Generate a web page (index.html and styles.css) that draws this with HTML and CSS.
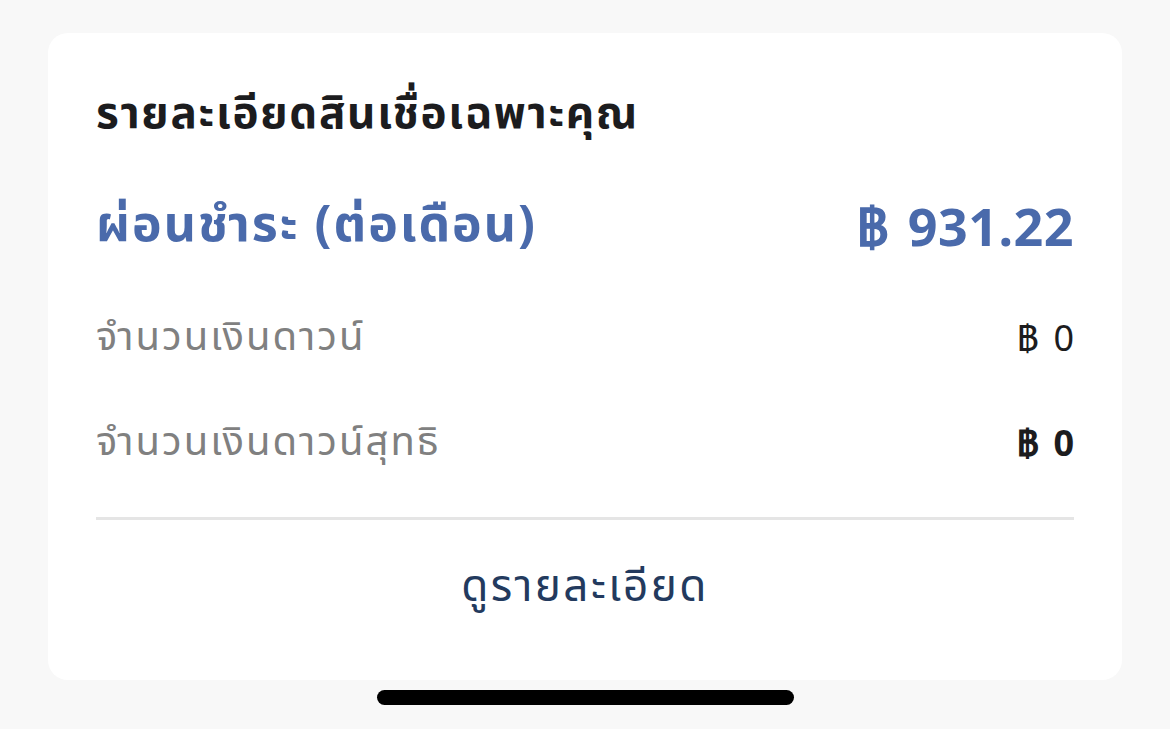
FILE: index.html
```html
<!DOCTYPE html>
<html lang="th">
<head>
<meta charset="utf-8">
<link rel="stylesheet" href="styles.css">
</head>
<body>
<div class="screen">
  <div class="card">
    <h1 class="title">รายละเอียดสินเชื่อเฉพาะคุณ</h1>
    <div class="row row-main">
      <span class="label-main">ผ่อนชำระ (ต่อเดือน)</span>
      <span class="value-main">฿ 931.22</span>
    </div>
    <div class="row row-sub row-first">
      <span class="label">จำนวนเงินดาวน์</span>
      <span class="value">฿ 0</span>
    </div>
    <div class="row row-sub row-second">
      <span class="label">จำนวนเงินดาวน์สุทธิ</span>
      <span class="value value-bold">฿ 0</span>
    </div>
    <div class="divider"></div>
    <div class="action">ดูรายละเอียด</div>
  </div>
  <div class="home-bar"></div>
</div>
</body>
</html>
```
FILE: styles.css
```css
html, body {
  margin: 0;
  padding: 0;
  background: #f8f8f8;
}
body {
  font-family: "Noto Sans Thai", "Noto Sans", "Open Sans", sans-serif;
  width: 1170px;
  height: 729px;
  overflow: hidden;
}
.screen {
  padding: 33px 48px 0 48px;
  display: flex;
  flex-direction: column;
  align-items: stretch;
}
.card {
  background: #ffffff;
  border-radius: 20px;
  height: 647px;
  box-sizing: border-box;
  padding: 52px 48px 0 48px;
  display: flex;
  flex-direction: column;
}
.title {
  margin: 0;
  font-size: 44px;
  letter-spacing: 1.7px;
  font-weight: 700;
  color: #1c1c1e;
  line-height: 60px;
  height: 60px;
}
.row {
  display: flex;
  justify-content: space-between;
  align-items: center;
}
.row-main {
  margin-top: 46px;
  height: 70px;
}
.label-main {
  font-size: 50px;
  letter-spacing: 2px;
  font-weight: 700;
  color: #4a6aab;
  line-height: 70px;
}
.value-main {
  font-family: "Noto Sans", "Open Sans", sans-serif;
  font-size: 52px;
  font-weight: 700;
  color: #4a6aab;
  line-height: 70px;
  letter-spacing: 0.5px;
  word-spacing: 4px;
}
.row-sub {
  height: 50px;
}
.row-first {
  margin-top: 52px;
}
.row-second {
  margin-top: 55px;
}
.label {
  font-size: 40px;
  letter-spacing: 2px;
  color: #808080;
  line-height: 50px;
}
.value {
  font-family: "Noto Sans", "Open Sans", sans-serif;
  font-size: 36px;
  color: #1c1c1e;
  line-height: 50px;
  word-spacing: 5px;
}
.value-bold {
  font-weight: 700;
}
.divider {
  height: 3px;
  background: #e5e5e5;
  margin-top: 49px;
  flex-shrink: 0;
}
.action {
  text-align: center;
  font-size: 44px;
  letter-spacing: 2.4px;
  color: #233a5e;
  margin-top: 38px;
  line-height: 60px;
  height: 60px;
}
.home-bar {
  align-self: center;
  width: 417px;
  height: 15px;
  border-radius: 8px;
  background: #000;
  margin-top: 10px;
}
```
